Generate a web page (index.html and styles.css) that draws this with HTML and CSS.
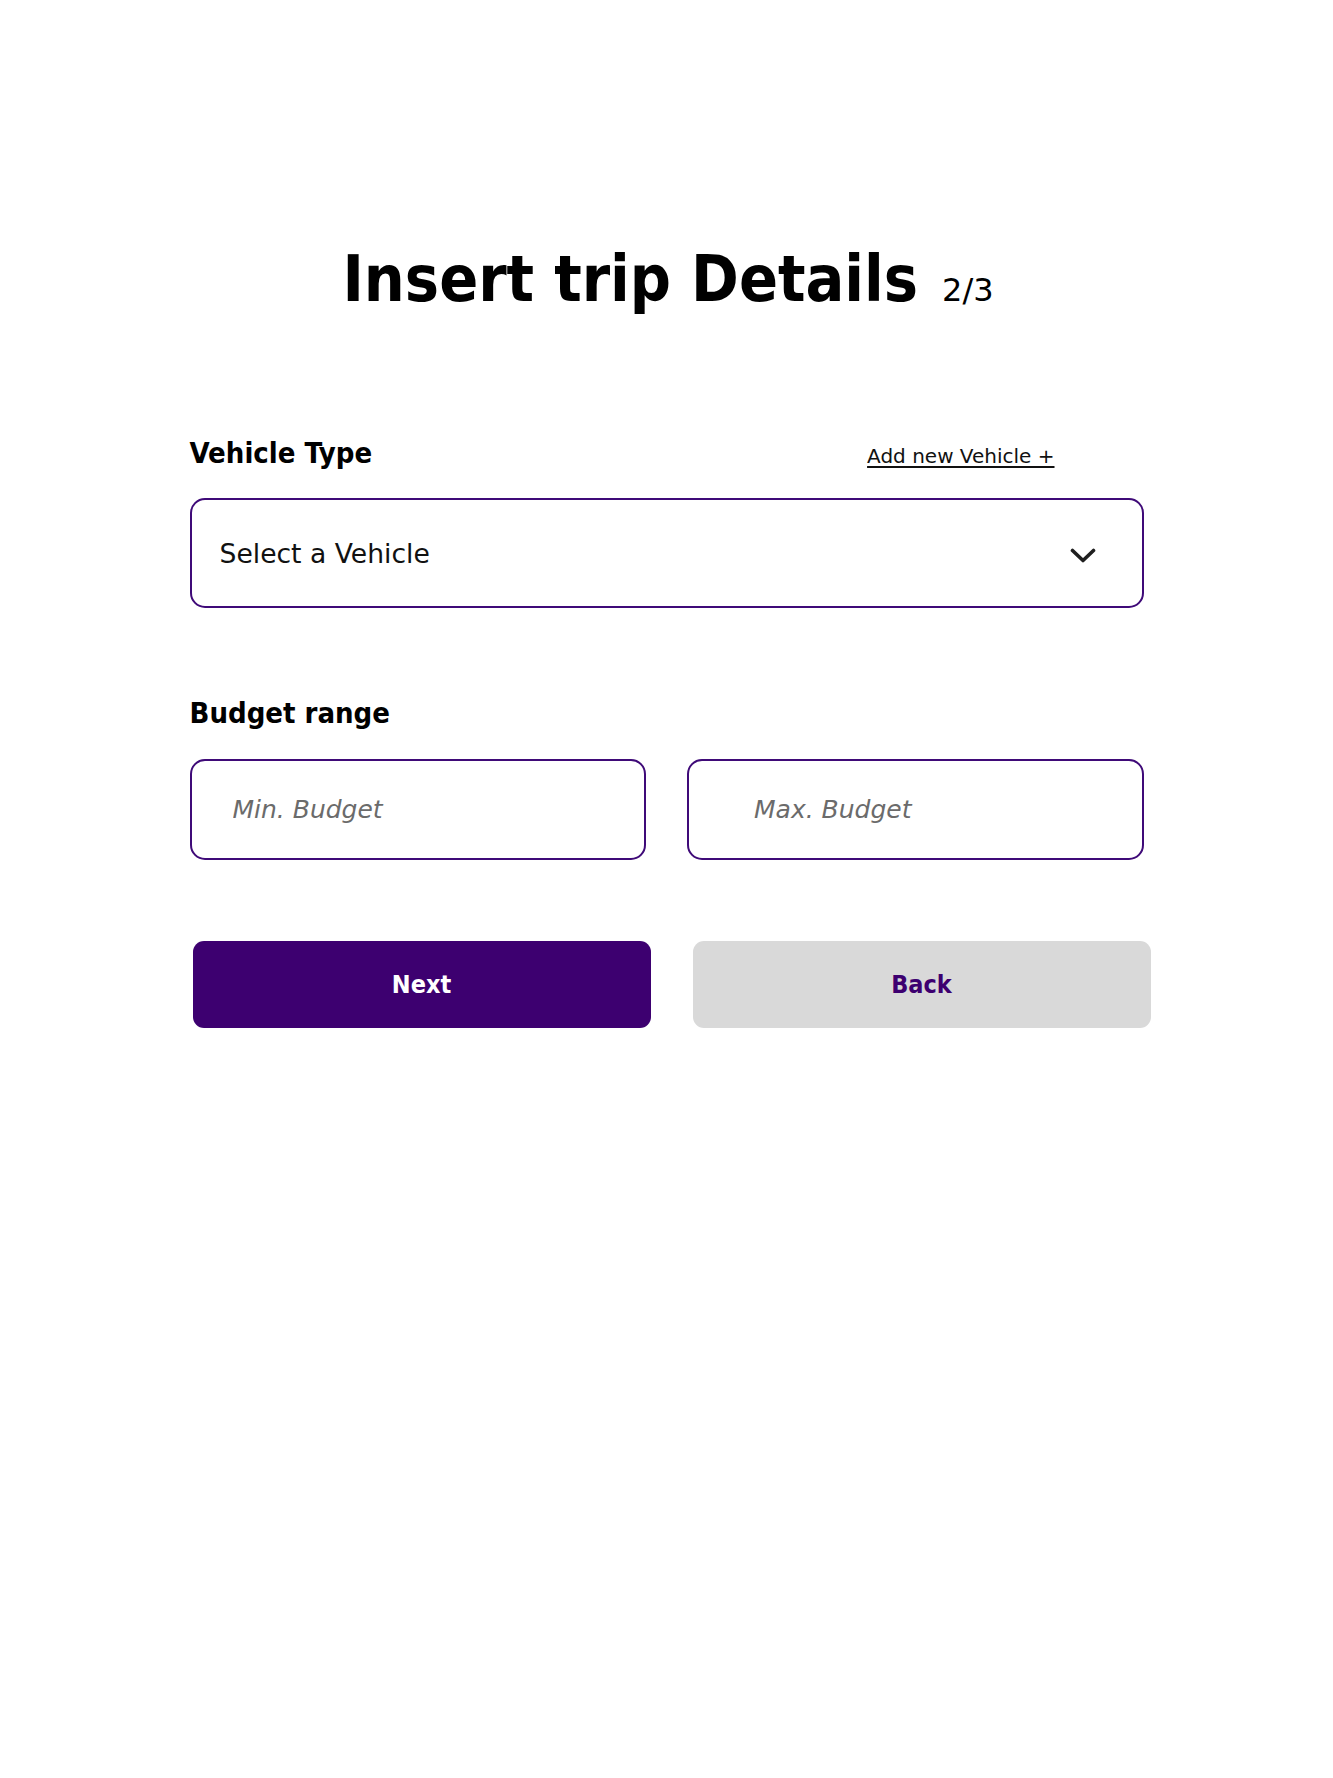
FILE: index.html
```html
<!DOCTYPE html>
<html lang="en">
<head>
<meta charset="utf-8">
<title>Insert trip Details</title>
<link rel="stylesheet" href="styles.css">
</head>
<body>
<main class="page">
  <h1 class="title">Insert trip Details<span class="step">2/3</span></h1>

  <form class="form">
    <div class="label-row">
      <span class="label">Vehicle Type</span>
      <a class="add-link" href="#">Add new Vehicle +</a>
    </div>
    <div class="select">
      <span class="select-text">Select a Vehicle</span>
      <svg class="chevron" width="26" height="16" viewBox="0 0 26 16" aria-hidden="true">
        <path d="M2.5 2.5 L13 12.5 L23.5 2.5" fill="none" stroke="#1f1f1f" stroke-width="3.6" stroke-linecap="round" stroke-linejoin="round"/>
      </svg>
    </div>

    <div class="label-row budget-label">
      <span class="label">Budget range</span>
    </div>
    <div class="budget-row">
      <input class="field field-min" type="text" placeholder="Min. Budget">
      <input class="field field-max" type="text" placeholder="Max. Budget">
    </div>

    <div class="button-row">
      <button class="btn btn-next" type="button">Next</button>
      <button class="btn btn-back" type="button">Back</button>
    </div>
  </form>
</main>
</body>
</html>
```

FILE: styles.css
```css
* {
  box-sizing: border-box;
}

html, body {
  margin: 0;
  padding: 0;
  background: #ffffff;
}

body {
  font-family: "DejaVu Sans", "Liberation Sans", sans-serif;
  color: #000000;
}

.page {
  padding-top: 241px;
  display: flex;
  flex-direction: column;
  align-items: center;
}

.title {
  margin: 0;
  font-family: "DejaVu Sans Condensed", "DejaVu Sans", sans-serif;
  font-stretch: condensed;
  font-weight: 700;
  font-size: 64px;
  line-height: 77px;
  height: 77px;
  color: #000;
  padding-left: 3px;
}

.step {
  font-family: "DejaVu Sans", sans-serif;
  font-stretch: normal;
  font-weight: 400;
  font-size: 32px;
  margin-left: 24px;
}

.form {
  width: 954px;
  margin-top: 118px;
  display: flex;
  flex-direction: column;
}

.label-row {
  display: flex;
  align-items: baseline;
  justify-content: space-between;
  height: 34px;
}

.label {
  font-family: "DejaVu Sans Condensed", "DejaVu Sans", sans-serif;
  font-stretch: condensed;
  font-weight: 700;
  font-size: 29px;
  line-height: 34px;
  color: #000;
}

.add-link {
  font-size: 20px;
  line-height: 24px;
  color: #111;
  text-decoration: underline;
  text-underline-offset: 3px;
  text-decoration-thickness: 1.5px;
  margin-right: 89px;
}

.select {
  margin-top: 28px;
  height: 110px;
  border: 2px solid #3f0a78;
  border-radius: 15px;
  display: flex;
  align-items: center;
  justify-content: space-between;
  padding: 0 46px 0 28px;
}

.select-text {
  font-size: 26.6px;
  line-height: 30px;
  color: #111;
  padding-top: 1px;
}

.chevron {
  display: block;
  margin-top: 6px;
}

.budget-label {
  margin-top: 88px;
}

.budget-row {
  margin-top: 29px;
  display: grid;
  grid-template-columns: 1fr 1fr;
  gap: 41px;
}

.field {
  height: 101px;
  width: 100%;
  border: 2px solid #3f0a78;
  border-radius: 15px;
  background: #fff;
  font-family: "DejaVu Sans", sans-serif;
  font-size: 25px;
  font-style: italic;
  color: #222;
  outline: none;
  margin: 0;
}

.field::placeholder {
  color: #6b6b6b;
  font-style: italic;
}

.field-min {
  padding: 0 0 0 41px;
}

.field-max {
  padding: 0 0 0 65px;
}

.button-row {
  margin-top: 81px;
  margin-left: 3px;
  width: 958px;
  display: grid;
  grid-template-columns: 1fr 1fr;
  gap: 42px;
}

.btn {
  height: 87px;
  border: none;
  border-radius: 11px;
  font-family: "DejaVu Sans Condensed", "DejaVu Sans", sans-serif;
  font-stretch: condensed;
  font-weight: 700;
  font-size: 25px;
  line-height: 30px;
  cursor: pointer;
  padding: 0;
}

.btn-next {
  background: #3d0070;
  color: #ffffff;
}

.btn-back {
  background: #d9d9d9;
  color: #3d0070;
}
```
